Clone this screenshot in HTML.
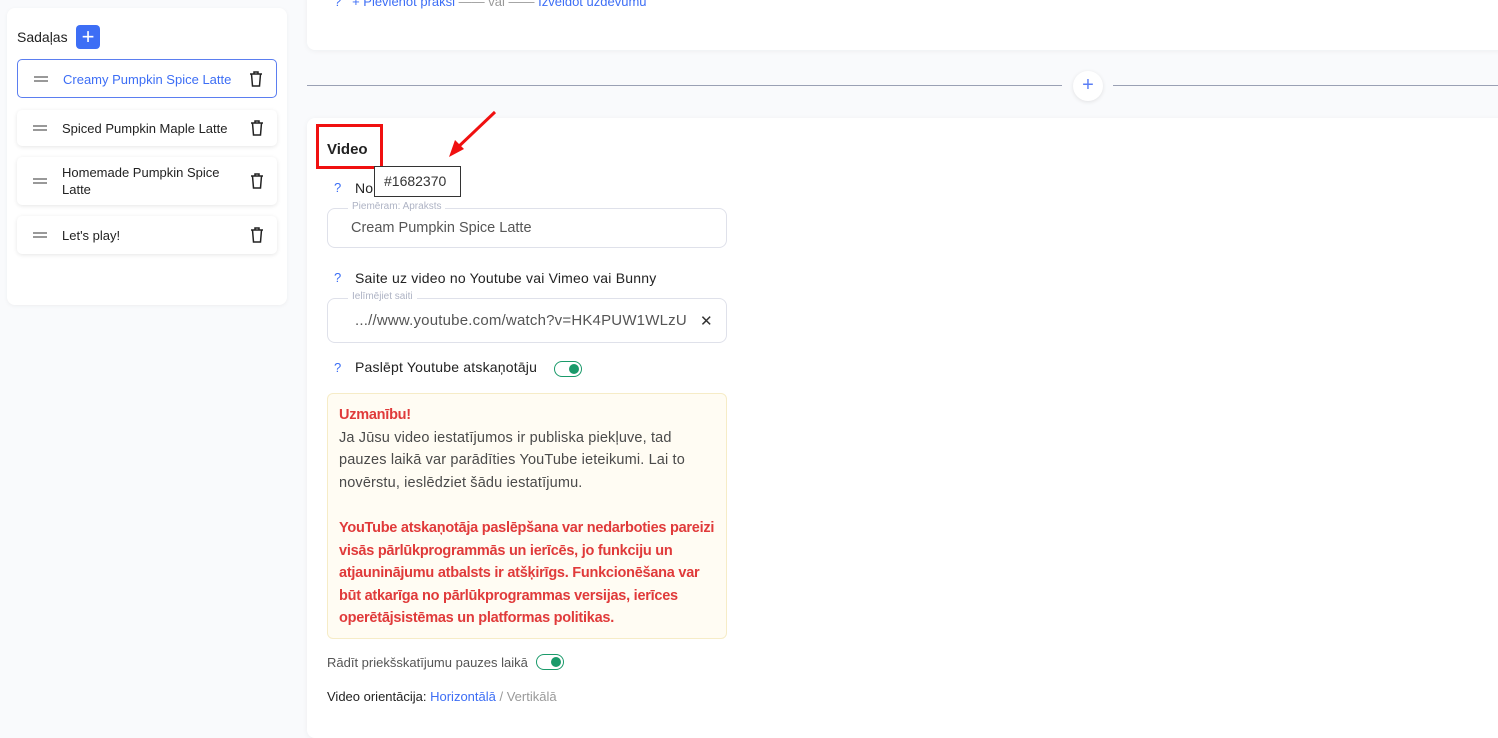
<!DOCTYPE html>
<html><head><meta charset="utf-8"><style>
*{box-sizing:border-box;margin:0;padding:0}
body{width:1498px;height:721px;overflow:hidden;background:#f9fafc;font-family:"Liberation Sans",sans-serif;position:relative;color:#222}
.abs{position:absolute}
.side{left:7px;top:8px;width:280px;height:297px;background:#fff;border-radius:8px;box-shadow:0 1px 4px rgba(0,0,0,.05)}
.item{position:absolute;left:17px;width:260px;background:#fff;border-radius:5px;box-shadow:0 1px 4px rgba(0,0,0,.1);font-size:13px;color:#222}
.item .h{position:absolute;left:16px;width:14px;height:6px;border-top:2px solid #999;border-bottom:2px solid #999;top:50%;margin-top:-3px}
.item .t{position:absolute;left:45px;line-height:17px}
.item svg{position:absolute;right:13px;top:50%;margin-top:-8px}
.card{background:#fff;border-radius:8px;box-shadow:0 1px 6px rgba(0,0,0,.05)}
.q{color:#3b6ef5;font-size:13px;position:absolute;left:334px}
.lbl{position:absolute;left:355px;font-size:14px;color:#222;letter-spacing:.2px}
.inp{position:absolute;left:327px;width:400px;border:1px solid #dfe1ea;border-radius:8px;background:#fff}
.leg{position:absolute;left:20px;top:-8px;background:#fff;padding:0 4px;font-size:10px;color:#aeb3c4}
.tog{position:absolute;width:28px;height:16px;border:1.5px solid #1a9a6a;border-radius:9px}
.tog i{position:absolute;right:2px;top:2px;width:10px;height:10px;border-radius:50%;background:#1a9a6a}
.warn{left:327px;top:393px;width:400px;height:246px;background:#fffcf3;border:1px solid #f6ecc7;border-radius:6px;padding:10px 11px;font-size:14.5px;line-height:22.6px;color:#4a4a4a;white-space:nowrap;letter-spacing:.15px}
.red{color:#e03a3a;font-weight:bold;letter-spacing:-.25px}
</style></head><body>
<div class="abs side"></div>
<div class="abs" style="left:17px;top:29px;font-size:14px">Sadaļas</div>
<div class="abs" style="left:76px;top:25px;width:24px;height:24px;background:#3d6ef5;border-radius:4px;color:#fff;font-size:22px;line-height:23px;text-align:center">+</div>
<div class="item" style="top:59px;height:39px;border:1px solid #5b7ef0;box-shadow:none"><div class="h"></div><div class="t" style="top:11px;color:#3d6ef5">Creamy Pumpkin Spice Latte</div><svg width="14" height="16" viewBox="0 0 14 16" fill="none" stroke="#222" stroke-width="1.5"><path d="M1 3h12M5 3V1h4v2M2.5 3l1 12h7l1-12"/></svg></div>
<div class="item" style="top:110px;height:36px"><div class="h"></div><div class="t" style="top:10px">Spiced Pumpkin Maple Latte</div><svg width="14" height="16" viewBox="0 0 14 16" fill="none" stroke="#222" stroke-width="1.5"><path d="M1 3h12M5 3V1h4v2M2.5 3l1 12h7l1-12"/></svg></div>
<div class="item" style="top:157px;height:48px"><div class="h"></div><div class="t" style="top:7px">Homemade Pumpkin Spice<br>Latte</div><svg width="14" height="16" viewBox="0 0 14 16" fill="none" stroke="#222" stroke-width="1.5"><path d="M1 3h12M5 3V1h4v2M2.5 3l1 12h7l1-12"/></svg></div>
<div class="item" style="top:216px;height:38px"><div class="h"></div><div class="t" style="top:11px">Let's play!</div><svg width="14" height="16" viewBox="0 0 14 16" fill="none" stroke="#222" stroke-width="1.5"><path d="M1 3h12M5 3V1h4v2M2.5 3l1 12h7l1-12"/></svg></div>

<div class="abs card" style="left:307px;top:-10px;width:1200px;height:60px"></div>
<div class="abs" style="left:334px;top:-6px;font-size:13px;color:#3d6ef5">?&nbsp;&nbsp;&nbsp;+ Pievienot praksi <span style="color:#999">—— vai ——</span> Izveidot uzdevumu</div>
<div class="abs" style="left:307px;top:85px;width:755px;height:1px;background:#9aa0b4"></div>
<div class="abs" style="left:1113px;top:85px;width:385px;height:1px;background:#9aa0b4"></div>
<div class="abs" style="left:1073px;top:71px;width:30px;height:30px;border-radius:50%;background:#fff;box-shadow:0 1px 4px rgba(0,0,0,.1);color:#5b7ef5;font-size:20px;line-height:29px;text-align:center">+</div>

<div class="abs card" style="left:307px;top:118px;width:1200px;height:620px"></div>
<div class="abs" style="left:327px;top:141px;font-size:15px;font-weight:bold">Video</div>
<div class="abs" style="left:316px;top:124px;width:67px;height:45px;border:3px solid #f01010"></div>
<svg class="abs" style="left:445px;top:110px" width="52" height="50"><path d="M50 2L10 40" stroke="#f01010" stroke-width="3"/><path d="M4 47l6-17 9 9z" fill="#f01010"/></svg>
<div class="q" style="top:180px">?</div><div class="lbl" style="top:180px">No</div>
<div class="abs" style="left:374px;top:166px;width:87px;height:31px;border:1px solid #333;background:#fff;font-size:14px;padding:6px 9px;color:#333">#1682370</div>
<div class="inp" style="top:208px;height:40px"><div class="leg">Piemēram: Apraksts</div><div style="position:absolute;left:23px;top:11px;font-size:14.5px;color:#555">Cream Pumpkin Spice Latte</div></div>
<div class="q" style="top:270px">?</div><div class="lbl" style="top:270px">Saite uz video no Youtube vai Vimeo vai Bunny</div>
<div class="inp" style="top:298px;height:45px"><div class="leg">Ielīmējiet saiti</div><div style="position:absolute;left:27px;top:13px;font-size:15px;color:#555;letter-spacing:.2px">...//www.youtube.com/watch?v=HK4PUW1WLzU</div><div style="position:absolute;left:372px;top:13px;font-size:15px;color:#333">✕</div></div>
<div class="q" style="top:360px">?</div><div class="lbl" style="top:359px">Paslēpt Youtube atskaņotāju</div>
<div class="tog" style="left:554px;top:361px"><i></i></div>
<div class="abs warn"><span class="red">Uzmanību!</span><br>Ja Jūsu video iestatījumos ir publiska piekļuve, tad<br>pauzes laikā var parādīties YouTube ieteikumi. Lai to<br>novērstu, ieslēdziet šādu iestatījumu.<br><br><span class="red">YouTube atskaņotāja paslēpšana var nedarboties pareizi<br>visās pārlūkprogrammās un ierīcēs, jo funkciju un<br>atjauninājumu atbalsts ir atšķirīgs. Funkcionēšana var<br>būt atkarīga no pārlūkprogrammas versijas, ierīces<br>operētājsistēmas un platformas politikas.</span></div>
<div class="abs" style="left:327px;top:655px;font-size:13px;color:#555">Rādīt priekšskatījumu pauzes laikā</div>
<div class="tog" style="left:536px;top:654px"><i></i></div>
<div class="abs" style="left:327px;top:689px;font-size:13px;color:#222">Video orientācija: <span style="color:#3d6ef5">Horizontālā</span> <span style="color:#999">/ Vertikālā</span></div>
</body></html>
